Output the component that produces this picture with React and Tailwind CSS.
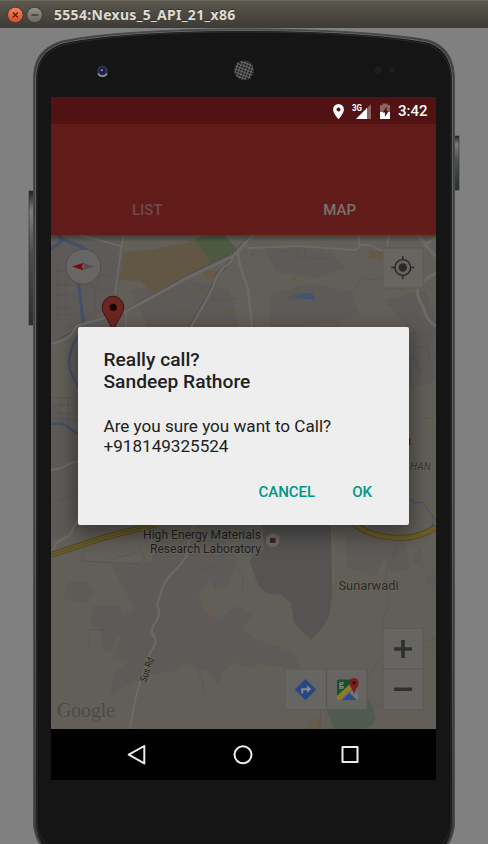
import React from "react";

function TitleBar() {
  return (
    <header className="flex h-7 shrink-0 items-center bg-gradient-to-b from-[#5b574d] to-[#3d3b36] border-t border-[#6a675d] pl-[7px]">
      <svg width="38" height="18" viewBox="0 0 38 18">
        <defs>
          <linearGradient id="close" x1="0" y1="0" x2="0" y2="1">
            <stop offset="0" stopColor="#f58563" />
            <stop offset="1" stopColor="#dd4a1a" />
          </linearGradient>
          <linearGradient id="mini" x1="0" y1="0" x2="0" y2="1">
            <stop offset="0" stopColor="#949189" />
            <stop offset="1" stopColor="#6a6760" />
          </linearGradient>
        </defs>
        <circle cx="8.3" cy="9" r="7.8" fill="url(#close)" stroke="#35332e" strokeWidth=".8" />
        <path d="M5.8 6.5l5 5m0-5l-5 5" stroke="#4b2012" strokeWidth="1.3" />
        <circle cx="27.6" cy="9" r="7.8" fill="url(#mini)" stroke="#35332e" strokeWidth=".8" />
        <path d="M24.2 9h7" stroke="#37352f" strokeWidth="1.3" />
      </svg>
      <h1 className="ml-[9px] whitespace-nowrap font-['Noto_Sans',sans-serif] text-[14px] font-bold leading-5 tracking-[0.3px] text-[#dfdbd2] [text-shadow:0_-1px_0_#33312c]">
        5554:Nexus_5_API_21_x86
      </h1>
    </header>
  );
}

function Bezel() {
  return (
    <svg className="absolute inset-0" width="488" height="816" viewBox="0 28 488 816">
      <defs>
        <linearGradient id="side" x1="0" y1="0" x2="0" y2="1">
          <stop offset="0" stopColor="#202223" />
          <stop offset=".15" stopColor="#7b7d7e" />
          <stop offset=".45" stopColor="#4c4f50" />
          <stop offset="1" stopColor="#2c2f30" />
        </linearGradient>
        <linearGradient id="rim" x1="0" y1="0" x2="0" y2="1">
          <stop offset="0" stopColor="#66686a" />
          <stop offset=".6" stopColor="#5c5e60" />
          <stop offset="1" stopColor="#3a3c3d" />
        </linearGradient>
        <pattern id="mesh" width="3" height="3" patternUnits="userSpaceOnUse" patternTransform="rotate(20)">
          <rect width="3" height="3" fill="#666" />
          <rect width="2" height="2" fill="#222" />
        </pattern>
      </defs>
      <rect x="29" y="191" width="5" height="134" fill="url(#side)" stroke="#303233" strokeWidth=".6" />
      <rect x="454" y="136" width="5" height="54" fill="url(#side)" stroke="#303233" strokeWidth=".6" />
      <path
        d="M33.5 80C33.5 57 43 47 62 41C105 32 180 29 244 29C308 29 383 32 428 40C446 45 454.5 59 454.5 80V822Q454.5 836 446 848H42Q33.5 836 33.5 822Z"
        fill="#3c3e40"
        stroke="#4a4c4e"
      />
      <path
        d="M35.500 80C35.500 60 45 49 63 43C106 33.500 180 30.500 244 30.500C308 30.500 382 33.500 427 42C444 47 452.500 61 452.500 80V822Q452.500 836 444 848H44Q35.500 836 35.500 822Z"
        fill="#151515"
        stroke="url(#rim)"
      />
      <path
        d="M37 80C37 62 46 51 64 45C107 35 180 32 244 32C308 32 381 35 426 44C442 49 451 63 451 80V822Q451 836 442 844H46Q37 836 37 822Z"
        fill="#151515"
        stroke="#2b2d2e"
      />
      <path d="M42 844H444" stroke="#090909" />
      <circle cx="102.5" cy="71" r="5.4" fill="#33343a" />
      <path d="M98 73.5a5 5 0 0 0 9 0" fill="none" stroke="#9b9b9f" strokeWidth="1.5" />
      <circle cx="102.3" cy="70.7" r="3" fill="#1b1a5c" />
      <circle cx="101.8" cy="70.3" r="1" fill="#9da0cc" />
      <circle cx="244" cy="70.3" r="9.8" fill="url(#mesh)" />
      <circle cx="378" cy="70" r="4" fill="#1e1b1b" />
      <circle cx="392" cy="70" r="2.5" fill="#211e1f" />
    </svg>
  );
}

function StatusBar() {
  return (
    <div className="flex h-[27px] shrink-0 items-center justify-end bg-[#501212] pr-[8.5px]">
      <svg width="61" height="20" viewBox="333 100 61 20" className="mr-[4px]">
        <path fillRule="evenodd" d="M338.5 103a5.4 5.4 0 0 0-5.4 5.4c0 4 5.4 9.8 5.4 9.8s5.4-5.8 5.4-9.8a5.4 5.4 0 0 0-5.4-5.4zm0 3.6a2 2 0 1 1 0 4 2 2 0 0 1 0-4z" fill="#fff" />
        <path d="M371 103v15h-14.5z" fill="#8d6263" />
        <path d="M367 107V118H356z" fill="#fff" />
        <text x="352" y="109.8" fill="#fff" className="font-['Roboto',sans-serif] text-[9.5px] font-bold" textLength="10" lengthAdjust="spacingAndGlyphs">3G</text>
        <path d="M382.5 102.500h5v1.600h2.500V111h-10v-6.900h2.500z" fill="#8d6263" />
        <path d="M380 111h10v7h-10z" fill="#fff" />
        <path d="M386.700 105.600l-4 6h2.200v4.500l3.800-6.200h-2z" fill="#501212" />
      </svg>
      <span className="mt-[2px] font-['Roboto',sans-serif] text-[15px] font-medium leading-none text-white">3:42</span>
    </div>
  );
}

function AppBar() {
  return (
    <div className="flex h-[111px] shrink-0 items-end bg-[#611c19] font-['Roboto',sans-serif] text-[15px] font-medium leading-[17px]">
      <div className="flex-1 pb-4 text-center text-[#6e4a49]">LIST</div>
      <div className="flex-1 border-b-2 border-[#66220f] pb-[14px] text-center text-[#797271]">MAP</div>
    </div>
  );
}

function MapView() {
  return (
    <div className="h-[494px] shrink-0 bg-[#625e58]">
      <svg width="385" height="494" viewBox="51 235 385 494">
        <defs>
          <linearGradient id="drop" x1="0" y1="0" x2="0" y2="1">
            <stop offset="0" stopColor="#000" stopOpacity=".35" />
            <stop offset="1" stopColor="#000" stopOpacity="0" />
          </linearGradient>
        </defs>

        {/* terrain patches */}
        <g fill="#5e5a57">
          <path d="M51 235h72l-6 70-40 20-26 15z" />
          <path d="M130 290l60-10 40 10 8 37h-90z" />
          <path d="M262 245l60 3 25 20-30 10-40-6zM270 295l40-12 40 8 10 25-60 11h-30zM385 300l40-10 11 30v60l-27 10v-60z" />
          <path d="M51 400l15 15 12 30v85l-27 10z" />
          <path d="M110 563l40-1 12-22h60l15 20-8 25-14 5-5-10-12 14 8 20 14 4 18-12 15 8 -12 16 22 12 30 10 8 18-40-6-26-2-14 12-2 12-12-16-22-6-14 8-22 2-20 10-18 12 2-22 16-12-16-4 8-22-22-8 14-12 22-6z" />
          <path d="M92 606h30l-4 24-6 22-9-1-3-22-9-3zM68 582h18l10 10-10 10-22-2z" />
          <path d="M345 535l60 5 5 30-20 2-5-16-10 20-28-8zM410 562l10-15 5 22zM424 577l12-2v10h-10zM238 645l12 12 8 12-20-4z" />
        </g>
        <path d="M123 252l28-2 43-9 18 23-57 29-15-12-21-1z" fill="#625745" />
        <path d="M203 271l12-1 4 5-11 5-5-5zM161 292l6 1-1 4-4-1zM369 250l14 2-1 8-13-3zM397 288l10 0-3 3z" fill="#655a46" />
        <path d="M194 240l9-5h22l12 15-4 5-21 9z" fill="#4b5a40" />
        <path d="M179 309q5-3 9 0-3 4-9 0zM196 288l8 1-2 2-7-1zM227 312q5-4 9 0l-7 2zM292 278h4v3h-4zM251 254h4v3h-4zM329 263h2v2h-2zM135 261l3-1v3h-3zM387 304h4v2h-4zM397 300h4v1h-4zM104 300h4v3h-4zM426 417h7v2h-7zM319 236h3v3h-3z" fill="#536143" />
        <path d="M262 520h69v15l2 45-1 18-3 18q-7 14-18 23-10-7-17-17l-3-19-9-8-16-2-8-8-8-23 3-8 11-4z" fill="#555453" />
        <path d="M331 520h5v30l-2 45-2-10z" fill="#65625b" />
        <path d="M326 708l10-5 34-3 6 18-4 8-9 3h-29z" fill="#4e5b4e" />
        <path d="M311 716l11 6-3 7h-12z" fill="#675b4a" />
        <path d="M208 613l3-1-1 7-3 0z" fill="#6c5a45" />
        <path d="M286 297l12-4 12 1 3 2-10 3-12 2z" fill="#54575a" />
        <path d="M298 296l7-3 8 1 3 7-6-2-6 0-5-1z" fill="#43546e" />
        <path d="M412 355l3 0 7 18-4 1z" fill="#575855" />
        <path d="M215 581l2-1-1 3z" fill="#425a85" />

        {/* water courses */}
        <g fill="none" stroke="#435069" strokeLinecap="round">
          <path d="M51 248q8-3 11-8l-3-5M62 239q9 4 18 7 11 5 9 14c-5 13-13 17-10 28l4 32" strokeWidth="3.2" />
          <path d="M83 320c0 10-6 16-10 25-5 12-5 22-1 30l6 12M51 424q12-2 18 4l9 6" strokeWidth="2.4" />
          <path d="M409 499l7 4 6-1 11 14 1 4-3 9" strokeWidth="1" />
        </g>

        {/* minor paths */}
        <g fill="none" stroke="#575350" strokeWidth=".7">
          <path d="M51 270l62 6M53 285h25l35 5M53 295l22 1M58 262v58M66 275v40M90 262l12 2 14 0M95 290v20l15 3M53 308h24M53 315h20M100 265l-4 28M190 240l12 5 8 12" />
          <path d="M51 398h26M53 405h24M51 413l26 1M60 398v22M68 398v22M51 418l26 2" />
          <path d="M277 247v4h16M298 250v8h37M305 248v10M335 258l-8-10M349 300q2-10 8-14 2-8 8-8l10 2 8-3M409 334h27M414 335v12h14l1 12h7M332 325q4-6 8 0" />
          <path d="M90 535l-9 26 58 3 6-5-6-15M110 560l28-8M157 559l15-3M193 560l5 11 10-4 12-4M220 555q20 10 24 25l-3 15M85 633l5-3h17M88 634l2 16M196 665l6 15 3 15M51 503l20-7 7-3" />
          <path d="M398 538q0 16-10 27-6 15 1 32 0 12-7 21 3 12 1 20l8 20M383 655l-15 22-5 10 17 22M426 642l10-4M423 647q10-2 11 3M336 686l-15 16-1 27" />
          <path d="M212 300l25-1" />
        </g>

        {/* roads */}
        <path d="M51 344l22-11 4-7 48-14 62-35 46-23 20-19M233 255l-4 9-10 8-12 26-17 29" fill="none" stroke="#56534f" strokeWidth="4" />
        <g fill="none" stroke="#6c6a68" strokeLinejoin="round">
          <path d="M51 344q16-4 22-11 2-6 4-7l48-14 62-34 46-22 20-21" strokeWidth="3" />
          <path d="M233 255q0 8-9 12-8 8-11 20-9 18-22 40M238 252q1 13 6 25l4 12 4 38" strokeWidth="2.4" />
          <path d="M123 235l-8 60M79 235l42 11M126 312v15M245 244q0 4 4 4l50-2 55 4q5-1 6-5l10 0 10 5 12 0 20 3M359 235v10M389 235l-2 12M246 246l-3-4" strokeWidth="1.8" />
          <path d="M418 235l18 22M424 246l12-9M436 273q-16 8-19 16 1 11 6 17 3 15 13 20" strokeWidth="3" />
          <path d="M51 470q10-1 14-4 6-4 13-4M78 519l-8 16-14 8-5 13" strokeWidth="2" />
          <path d="M196 524q-7 8-9 30-3 8-12 16-13 13-14 23l-4 12q4 8 0 15-9 11-2 18 2 6-5 15l-9 27q-7 20-9 38l-2 11" strokeWidth="2" />
          <path d="M51 720l3 9M190 327l4-6M428 320l8 6" strokeWidth="1" />
        </g>
        <path d="M51 555l55-18 51-13M354 523q15 14 45 15 22 0 37-11" fill="none" stroke="#514629" strokeWidth="6" />
        <path d="M51 555l55-18 51-13M354 523q15 14 45 15 22 0 37-11" fill="none" stroke="#6c5d27" strokeWidth="4.4" />
        <path d="M51 555l55-18 51-13" fill="none" stroke="#554b27" strokeWidth=".8" />
        <rect x="51" y="235" width="385" height="7" fill="url(#drop)" />

        {/* compass */}
        <circle cx="83.3" cy="266.6" r="17.4" fill="#676665" stroke="#4d4b49" strokeWidth=".8" />
        <path d="M83.3 263l11.3 3.600-11.300 3.600z" fill="#525251" />
        <path d="M72 266.600l11.300-3.600-1.500 3.600 1.500 3.600z" fill="#760c0c" />

        {/* marker */}
        <path d="M113 296.3a10.7 10.7 0 0 0-10.7 10.7c0 8 6.4 12 9 21h3.4c2.6-9 9-13 9-21A10.7 10.7 0 0 0 113 296.3z" fill="#6c2621" stroke="#3c1512" />
        <circle cx="113.2" cy="307.3" r="3.6" fill="#1d0404" />

        {/* labels */}
        <g className="font-['Roboto',sans-serif] text-[13px]" fill="#201f1d" stroke="#67645e" strokeWidth="2" paintOrder="stroke" strokeLinejoin="round">
          <text x="143" y="538.5" textLength="118" lengthAdjust="spacingAndGlyphs">High Energy Materials</text>
          <text x="150" y="553" textLength="111" lengthAdjust="spacingAndGlyphs">Research Laboratory</text>
          <text x="338.5" y="590" textLength="60" lengthAdjust="spacingAndGlyphs" fill="#2e2a20">Sunarwadi</text>
          <text x="410" y="470" textLength="21" lengthAdjust="spacingAndGlyphs" fill="#3a362f" className="text-[11px] italic">HAN</text>
          <text x="0" y="0" transform="translate(146 682.5) rotate(-71)" textLength="25" lengthAdjust="spacingAndGlyphs" className="text-[10px]">Sus Rd</text>
        </g>
        <circle cx="272.8" cy="540.3" r="7" fill="#6b6a69" stroke="#575552" strokeWidth=".7" />
        <rect x="270" y="538" width="5.5" height="5" fill="#3a2622" />
        <rect x="409" y="438" width="1.2" height="7" fill="#4b1515" />
        <text x="57" y="716.5" textLength="58" lengthAdjust="spacingAndGlyphs" fill="#4a4845" stroke="#6a6762" strokeWidth=".8" paintOrder="stroke" className="font-['Liberation_Serif',serif] text-[22px]">Google</text>

        {/* map controls */}
        <g fill="#686662" stroke="#5a5753" strokeWidth=".8">
          <rect x="382.8" y="248" width="40.4" height="40" rx="1" fillOpacity=".93" />
          <rect x="382.8" y="628.5" width="40.4" height="81.300" rx="1" fillOpacity=".88" />
          <rect x="285" y="669" width="82" height="40.800" rx="1" fillOpacity=".88" />
        </g>
        <path d="M383 669h40M326.500 669v40" stroke="#5a5753" strokeWidth="1.2" />
        <g stroke="#2a2a29" fill="none" strokeWidth="1.5">
          <circle cx="402.8" cy="267.500" r="7.900" />
          <circle cx="402.8" cy="267.500" r="4.200" fill="#2a2a29" stroke="none" />
          <path d="M402.800 256v4M402.800 275v4M391.300 267.500h4M410.300 267.500h4" />
        </g>
        <path d="M394 649h18M403 640v18M394 689.300h18" stroke="#302f2f" strokeWidth="3.600" />
        <path d="M305.500 679l10.700 10.600-10.700 10.600-10.700-10.600z" fill="#284681" />
        <path d="M302.200 693.500v-4.200h6" fill="none" stroke="#85878b" strokeWidth="2" />
        <path d="M306.800 685.300v7.600l4.600-3.800z" fill="#85878b" />
        <g>
          <rect x="337" y="679.500" width="21" height="20.500" rx="1.500" fill="#174f2f" />
          <path d="M337 700l21-20v20z" fill="#6b6967" />
          <path d="M337 699.300V696l16-15h5v2L340 700h-2z" fill="#8f7b29" />
          <path d="M342 700l7.300-7 7.200 7z" fill="#294c90" />
          <path d="M350 692l8 8v-5l-5-5z" fill="#7a7875" />
          <text x="338.800" y="687" fill="#8a918b" className="font-['Liberation_Serif',serif] text-[10px] font-bold">g</text>
          <path d="M354 678a4.700 4.700 0 0 0-4.700 4.700c0 4 3.600 6 4.700 12 1.100-6 4.700-8 4.700-12A4.700 4.700 0 0 0 354 678z" fill="#78211c" />
          <circle cx="354" cy="682.700" r="1.700" fill="#390c0a" />
        </g>
      </svg>
    </div>
  );
}

function NavBar() {
  return (
    <div className="flex h-[51px] shrink-0 items-center justify-center gap-[83px] bg-black pr-px">
      <svg width="24" height="24" viewBox="0 0 24 24" fill="none" stroke="#ececec" strokeWidth="2" strokeLinejoin="round">
        <path d="M20.300 3v17.400L4.700 11.700z" />
      </svg>
      <svg width="24" height="24" viewBox="0 0 24 24" fill="none" stroke="#ececec" strokeWidth="2">
        <circle cx="12" cy="11.700" r="8.500" />
      </svg>
      <svg width="24" height="24" viewBox="0 0 24 24" fill="none" stroke="#ececec" strokeWidth="2" strokeLinejoin="round">
        <rect x="4.500" y="4" width="15" height="15" />
      </svg>
    </div>
  );
}

function CallDialog() {
  return (
    <div className="absolute inset-x-0 bottom-[51px] top-[27px] flex items-center justify-center pb-px">
      <section className="flex h-[198px] w-[331px] flex-col rounded-[2px] bg-[#eeeeee] pl-[25.5px] pt-[22px] font-['Roboto',sans-serif] text-[#212121] shadow-[0_7px_20px_3px_rgba(0,0,0,0.4)]">
        <h2 className="text-[19.2px] font-medium leading-[22px]">
          Really call?
          <br />
          Sandeep Rathore
        </h2>
        <p className="mt-[23px] text-[17.1px] leading-5">
          Are you sure you want to Call?
          <br />
          +918149325524
        </p>
        <div className="mt-[27px] flex justify-end gap-[37px] pr-[37px] text-[15px] font-medium leading-[18px] text-[#009688]">
          <button>CANCEL</button>
          <button>OK</button>
        </div>
      </section>
    </div>
  );
}

export default function App() {
  return (
    <div className="flex h-[844px] w-[488px] flex-col overflow-hidden bg-[#808080]">
      <TitleBar />
      <main className="relative flex-1 pl-[51px] pt-[69px]">
        <Bezel />
        <div className="relative flex h-[683px] w-[385px] flex-col overflow-hidden">
          <StatusBar />
          <AppBar />
          <MapView />
          <NavBar />
          <CallDialog />
        </div>
      </main>
    </div>
  );
}
